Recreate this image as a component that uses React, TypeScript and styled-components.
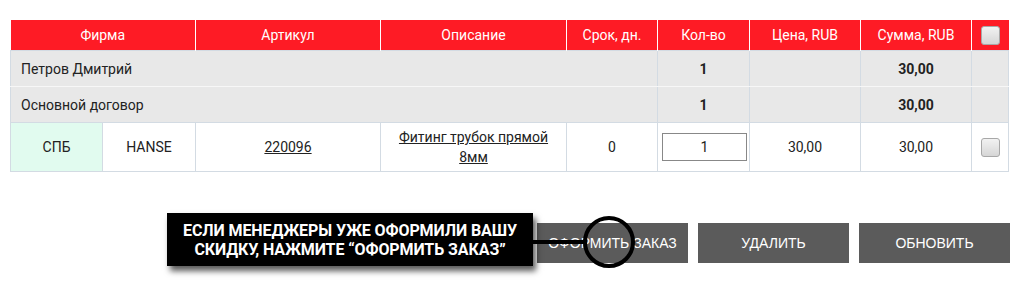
import styled, { createGlobalStyle } from "styled-components";

const GlobalStyle = createGlobalStyle`
  body {
    margin: 0;
    background: #ffffff;
    font-family: Roboto, "Liberation Sans", Arial, sans-serif;
  }
`;

const Page = styled.div`
  position: relative;
  width: 1020px;
  height: 292px;
  padding: 20px 0 0 10px;
  box-sizing: border-box;
`;

const Table = styled.table`
  width: 998px;
  border-collapse: collapse;
  table-layout: fixed;
  font-size: 14px;
  color: #222;
`;

const HeadCell = styled.th`
  height: 30px;
  padding: 0;
  background: #fe1b25;
  color: #fff;
  font-weight: 400;
  font-size: 14px;
  text-align: center;
  border-left: 1px solid #fff;
  &:first-child {
    border-left: none;
  }
`;

const Row = styled.tr<{ $group?: boolean; $split?: boolean }>`
  background: ${(p) => (p.$group ? "#e8e8e8" : "#fff")};
  & > td {
    ${(p) => (p.$split ? "border-bottom-color: #f7f7f7;" : "")}
  }
`;

const Cell = styled.td<{ $bold?: boolean; $left?: boolean; $tint?: string; $h?: number }>`
  height: ${(p) => p.$h ?? 35}px;
  padding: 0 ${(p) => (p.$left ? "10px" : "4px")};
  text-align: ${(p) => (p.$left ? "left" : "center")};
  font-weight: ${(p) => (p.$bold ? 700 : 400)};
  background: ${(p) => p.$tint ?? "transparent"};
  border: 1px solid #d3dbe3;
  line-height: 20px;
`;

const Link = styled.a`
  color: #222;
  text-decoration: underline;
`;

const QtyInput = styled.input`
  width: 85px;
  height: 28px;
  box-sizing: border-box;
  border: 1px solid #888;
  text-align: center;
  font-family: Roboto, sans-serif;
  font-size: 14px;
  color: #222;
  padding: 0;
`;

const Check = styled.span`
  display: inline-block;
  width: 19px;
  height: 19px;
  box-sizing: border-box;
  border: 1px solid #a8a8a8;
  border-radius: 3px;
  background: linear-gradient(#f2f2f2, #d6d6d6);
  vertical-align: middle;
`;

const Actions = styled.div`
  display: flex;
  justify-content: flex-end;
  gap: 10px;
  margin-top: 51px;
  width: 1000px;
`;

const Button = styled.button`
  width: 151px;
  height: 40px;
  border: none;
  background: #5b5b5b;
  color: #fff;
  font-family: "Liberation Sans", Arial, sans-serif;
  font-size: 14px;
  text-transform: uppercase;
  padding: 0;
`;

const Callout = styled.div`
  position: absolute;
  left: 167px;
  top: 213px;
  width: 366px;
  height: 53px;
  background: #000;
  color: #fff;
  box-shadow: 3px 5px 6px rgba(0, 0, 0, 0.65);
  display: flex;
  align-items: center;
  justify-content: center;
  text-align: center;
  font-family: Roboto, sans-serif;
  font-weight: 700;
  font-size: 16px;
  line-height: 19px;
  letter-spacing: -0.1px;
  text-transform: uppercase;
`;

const Pointer = styled.svg`
  position: absolute;
  left: 533px;
  top: 214px;
  overflow: visible;
`;

const heads = ["Артикул", "Описание", "Срок, дн.", "Кол-во", "Цена, RUB", "Сумма, RUB"];

export default function App() {
  return (
    <>
      <GlobalStyle />
      <Page>
        <Table>
          <colgroup>
            <col style={{ width: 92 }} />
            <col style={{ width: 93 }} />
            <col style={{ width: 185 }} />
            <col style={{ width: 186 }} />
            <col style={{ width: 91 }} />
            <col style={{ width: 92 }} />
            <col style={{ width: 111 }} />
            <col style={{ width: 111 }} />
            <col style={{ width: 37 }} />
          </colgroup>
          <thead>
            <tr>
              <HeadCell colSpan={2}>Фирма</HeadCell>
              {heads.map((h) => (
                <HeadCell key={h}>{h}</HeadCell>
              ))}
              <HeadCell>
                <Check />
              </HeadCell>
            </tr>
          </thead>
          <tbody>
            <Row $group $split>
              <Cell colSpan={5} $left>
                Петров Дмитрий
              </Cell>
              <Cell $bold>1</Cell>
              <Cell />
              <Cell $bold>30,00</Cell>
              <Cell />
            </Row>
            <Row $group>
              <Cell colSpan={5} $left>
                Основной договор
              </Cell>
              <Cell $bold>1</Cell>
              <Cell />
              <Cell $bold>30,00</Cell>
              <Cell />
            </Row>
            <Row>
              <Cell $h={48} $tint="#e1fbef">СПБ</Cell>
              <Cell $h={48}>HANSE</Cell>
              <Cell $h={48}>
                <Link href="#">220096</Link>
              </Cell>
              <Cell $h={48}>
                <Link href="#">Фитинг трубок прямой 8мм</Link>
              </Cell>
              <Cell $h={48}>0</Cell>
              <Cell $h={48}>
                <QtyInput defaultValue="1" />
              </Cell>
              <Cell $h={48}>30,00</Cell>
              <Cell $h={48}>30,00</Cell>
              <Cell $h={48}>
                <Check />
              </Cell>
            </Row>
          </tbody>
        </Table>
        <Actions>
          <Button>Оформить заказ</Button>
          <Button>Удалить</Button>
          <Button>Обновить</Button>
        </Actions>
        <Callout>
          Если менеджеры уже оформили вашу
          <br />
          скидку, нажмите “оформить заказ”
        </Callout>
        <Pointer width="110" height="56" viewBox="0 0 110 56">
          <line x1="0" y1="28" x2="52" y2="28" stroke="#000" strokeWidth="4" />
          <circle cx="76" cy="28" r="24" fill="none" stroke="#000" strokeWidth="4" />
        </Pointer>
      </Page>
    </>
  );
}
